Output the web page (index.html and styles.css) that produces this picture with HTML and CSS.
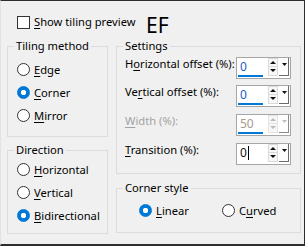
FILE: index.html
```html
<!DOCTYPE html>
<html lang="en">
<head>
  <meta charset="UTF-8" />
  <title>Tiling</title>
  <link rel="stylesheet" href="styles.css">
</head>
<body>

<div class="dialog">
  <div class="top">
    <label class="check"><span class="box"></span><span><u>S</u>how tiling preview</span></label>
    <span class="code">EF</span>
  </div>

  <div class="columns">
    <div class="col left">
      <fieldset class="group tiling">
        <legend>Tiling method</legend>
        <div class="radio"><span class="dot"></span><span><u>E</u>dge</span></div>
        <div class="radio"><span class="dot on"></span><span><u>C</u>orner</span></div>
        <div class="radio"><span class="dot"></span><span><u>M</u>irror</span></div>
      </fieldset>
      <fieldset class="group direction">
        <legend>Direction</legend>
        <div class="radio"><span class="dot"></span><span><u>H</u>orizontal</span></div>
        <div class="radio"><span class="dot"></span><span><u>V</u>ertical</span></div>
        <div class="radio"><span class="dot on"></span><span><u>B</u>idirectional</span></div>
      </fieldset>
    </div>

    <div class="col right">
      <fieldset class="group settings">
        <legend>Settings</legend>
        <div class="field">
          <span class="lbl">H<u>o</u>rizontal offset (%):</span>
          <div class="spin">
            <div class="value"><span class="num">0</span><div class="bar"></div></div>
            <svg class="arrows" width="22" height="20" viewBox="0 0 22 20"><rect x="0.5" y="0.5" width="9" height="17" fill="#f7f7f7" stroke="#dadada"/><line x1="0" y1="8.5" x2="10" y2="8.5" stroke="#dadada"/><polygon points="2,6 8,6 5,3" fill="#111"/><polygon points="2,11 8,11 5,14" fill="#111"/><rect x="11" y="0" width="10" height="17" fill="#fdfdfd"/><line x1="20.5" y1="0" x2="20.5" y2="18" stroke="#6a6a6a"/><line x1="11" y1="17.5" x2="21" y2="17.5" stroke="#6a6a6a"/><polygon points="14,5 19,5 16.5,8" fill="#111"/></svg>
          </div>
        </div>
        <div class="field">
          <span class="lbl">Ve<u>r</u>tical offset (%):</span>
          <div class="spin">
            <div class="value"><span class="num">0</span><div class="bar"></div></div>
            <svg class="arrows" width="22" height="20" viewBox="0 0 22 20"><rect x="0.5" y="0.5" width="9" height="17" fill="#f7f7f7" stroke="#dadada"/><line x1="0" y1="8.5" x2="10" y2="8.5" stroke="#dadada"/><polygon points="2,6 8,6 5,3" fill="#111"/><polygon points="2,11 8,11 5,14" fill="#111"/><rect x="11" y="0" width="10" height="17" fill="#fdfdfd"/><line x1="20.5" y1="0" x2="20.5" y2="18" stroke="#6a6a6a"/><line x1="11" y1="17.5" x2="21" y2="17.5" stroke="#6a6a6a"/><polygon points="14,5 19,5 16.5,8" fill="#111"/></svg>
          </div>
        </div>
        <div class="field disabled">
          <span class="lbl"><u>W</u>idth (%):</span>
          <div class="spin">
            <div class="value"><span class="num">50</span><div class="bar"></div></div>
            <svg class="arrows" width="22" height="20" viewBox="0 0 22 20"><rect x="0.5" y="0.5" width="9" height="17" fill="#f7f7f7" stroke="#e4e4e4"/><line x1="0" y1="8.5" x2="10" y2="8.5" stroke="#e4e4e4"/><polygon points="2,6 8,6 5,3" fill="#bdbdbd"/><polygon points="2,11 8,11 5,14" fill="#bdbdbd"/><rect x="11" y="0" width="10" height="17" fill="#fdfdfd"/><line x1="20.5" y1="0" x2="20.5" y2="18" stroke="#8a8a8a"/><line x1="11" y1="17.5" x2="21" y2="17.5" stroke="#8a8a8a"/><polygon points="14,5 19,5 16.5,8" fill="#bdbdbd"/></svg>
          </div>
        </div>
        <div class="field">
          <span class="lbl"><u>T</u>ransition (%):</span>
          <div class="spin">
            <div class="value"><span class="num focus">0</span></div>
            <svg class="arrows" width="22" height="20" viewBox="0 0 22 20"><rect x="0.5" y="0.5" width="9" height="17" fill="#f7f7f7" stroke="#dadada"/><line x1="0" y1="8.5" x2="10" y2="8.5" stroke="#dadada"/><polygon points="2,6 8,6 5,3" fill="#111"/><polygon points="2,11 8,11 5,14" fill="#111"/><rect x="11" y="0" width="10" height="17" fill="#fdfdfd"/><line x1="20.5" y1="0" x2="20.5" y2="18" stroke="#6a6a6a"/><line x1="11" y1="17.5" x2="21" y2="17.5" stroke="#6a6a6a"/><polygon points="14,5 19,5 16.5,8" fill="#111"/></svg>
          </div>
        </div>
      </fieldset>
      <fieldset class="group corner">
        <legend>Corner style</legend>
        <div class="options">
          <div class="radio"><span class="dot on"></span><span><u>L</u>inear</span></div>
          <div class="radio"><span class="dot"></span><span>C<u>u</u>rved</span></div>
        </div>
      </fieldset>
    </div>
  </div>
</div>

</body>
</html>
```

FILE: styles.css
```css
body {
  margin: 0;
  background: #f0f0f0;
  font-family: 'Noto Sans', sans-serif;
  font-size: 11.2px;
  line-height: 16px;
  color: #000;
}

u {
  text-decoration-thickness: 1px;
  text-underline-offset: 2px;
}

.dialog {
  width: 305px;
  height: 246px;
  box-sizing: border-box;
  background: #f0f0f0;
  border-top: 1px solid #2e2e2e;
  border-right: 1px solid #2e2e2e;
  border-bottom: 2px solid #2e2e2e;
  border-left: 1px solid #e2e2e2;
}

.top {
  display: flex;
  height: 37px;
  padding-left: 16px;
}

.check {
  display: flex;
  align-items: center;
  gap: 4px;
  width: 129px;
  height: 16px;
  margin-top: 13px;
  white-space: nowrap;
}

.box {
  width: 11px;
  height: 11px;
  border: 1px solid #333;
  background: #fff;
}

.code {
  margin-top: 12px;
  font-size: 21px;
  line-height: 24px;
}

.columns {
  display: flex;
  gap: 8px;
  padding-left: 6px;
}

.col {
  display: flex;
  flex-direction: column;
}

.left {
  width: 101px;
  gap: 5px;
}

.right {
  width: 185px;
  gap: 6px;
}

.group {
  margin: 0;
  min-width: 0;
  border: 1px solid #dcdcdc;
}

.group legend {
  padding: 0 2px;
  line-height: 16px;
}

.tiling, .direction {
  padding: 4px 0 9px 9px;
}

.tiling legend, .direction legend {
  margin-left: -3px;
}

.direction {
  padding-top: 0;
  padding-bottom: 6px;
}

.radio {
  display: flex;
  align-items: center;
  gap: 4px;
  height: 23px;
  white-space: nowrap;
}

.dot {
  width: 11px;
  height: 11px;
  border: 1px solid #333;
  border-radius: 50%;
  background: #fff;
}

.dot.on {
  border-color: #0078d7;
  background: radial-gradient(circle, #fff 0 2.4px, #0078d7 3px);
}

.settings {
  padding: 3px 9px 8px 8px;
  display: flex;
  flex-direction: column;
  gap: 6px;
}

.settings legend, .corner legend {
  margin-left: -2px;
}

.field {
  display: flex;
  height: 22px;
}

.field + .field + .field {
  margin-top: 1px;
}

.lbl {
  flex: 1;
  margin-top: -1px;
  white-space: nowrap;
}

.disabled .lbl {
  color: #a3a3a3;
}

.spin {
  display: flex;
  flex: none;
  width: 53px;
  height: 20px;
  border: 1px solid #a6a6a6;
  background: #fff;
}

.value {
  width: 31px;
  padding-top: 1px;
}

.num {
  display: block;
  height: 16px;
  padding-left: 3px;
  font-size: 12px;
  color: #1f5cc0;
}

.disabled .num {
  color: #a89a8e;
}

.num.focus {
  color: #111;
}

.num.focus::after {
  content: "";
  display: inline-block;
  width: 1px;
  height: 14px;
  margin-left: 1px;
  vertical-align: -3px;
  background: #000;
}

.bar {
  width: 25px;
  height: 2px;
  margin-left: 1px;
  background: #0078d7;
}

.arrows {
  display: block;
}

.corner {
  padding: 3px 0 10px 8px;
}

.options {
  display: flex;
  padding-left: 14px;
}

.options .radio:first-child {
  width: 83px;
}
```
